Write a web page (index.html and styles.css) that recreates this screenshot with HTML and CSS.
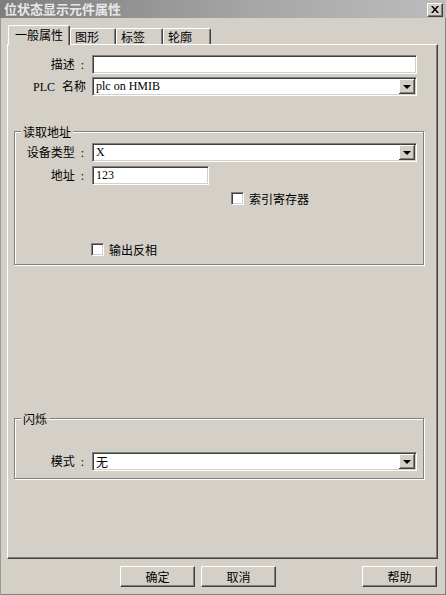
FILE: index.html
```html
<!DOCTYPE html>
<html>
<head>
<meta charset="utf-8">
<link rel="stylesheet" href="styles.css">
</head>
<body>
<div class="window">
  <div class="titlebar">
    <span class="title">位状态显示元件属性</span>
    <span class="close"><svg width="8" height="7" viewBox="0 0 8 7"><path d="M0 0h2l2 2.5 2-2.5h2l-3 3.5 3 3.5h-2l-2-2.5-2 2.5h-2l3-3.5z" fill="#000"/></svg></span>
  </div>
  <div class="tabs">
    <div class="tab active">一般属性</div>
    <div class="tab w46">图形</div>
    <div class="tab w47">标签</div>
    <div class="tab w48">轮廓</div>
  </div>
  <div class="panel">
    <div class="row">
      <span class="lbl">描述 :</span>
      <div class="field wide"></div>
    </div>
    <div class="row r2">
      <span class="lbl plc">PLC 名称</span>
      <div class="field wide select"><span class="val">plc on HMIB</span><span class="drop"><i class="tri"></i></span></div>
    </div>

    <div class="group g1">
      <div class="legend">读取地址</div>
      <div class="row">
        <span class="lbl glbl">设备类型 :</span>
        <div class="field wide select"><span class="val">X</span><span class="drop"><i class="tri"></i></span></div>
      </div>
      <div class="row r-addr">
        <span class="lbl glbl">地址 :</span>
        <div class="field short"><span class="val">123</span></div>
      </div>
      <div class="check c-index"><span class="box"></span><span class="ctext">索引寄存器</span></div>
      <div class="check c-inv"><span class="box"></span><span class="ctext">输出反相</span></div>
    </div>

    <div class="group g2">
      <div class="legend">闪烁</div>
      <div class="row">
        <span class="lbl glbl">模式 :</span>
        <div class="field wide select"><span class="val cjk">无</span><span class="drop"><i class="tri"></i></span></div>
      </div>
    </div>
  </div>
  <div class="buttons">
    <div class="btn">确定</div>
    <div class="btn b2">取消</div>
    <div class="btn b3">帮助</div>
  </div>
</div>
</body>
</html>
```

FILE: styles.css
```css
html, body {
  margin: 0;
  padding: 0;
  background: #d4d0c8;
}

.window {
  width: 446px;
  height: 595px;
  box-sizing: border-box;
  background: #d4d0c8;
  display: flex;
  flex-direction: column;
  font-family: "Liberation Serif", "Noto Sans CJK SC", serif;
  font-size: 12px;
  color: #000;
  box-shadow: inset 1px 0 0 #9a9a9a, inset -1px 0 0 #808080, inset 0 -1px 0 #808080;
}

.titlebar {
  height: 18px;
  background: linear-gradient(to right, #7e7e7e, #a8a8a8 60%, #bcbcbc);
  display: flex;
  align-items: center;
  justify-content: space-between;
  padding: 0 3px 0 4px;
}

.title {
  font-family: "Noto Sans CJK SC", sans-serif;
  font-weight: bold;
  font-size: 13px;
  line-height: 16px;
  color: #e8e8e8;
}

.close {
  width: 16px;
  height: 14px;
  box-sizing: border-box;
  background: #d4d0c8;
  border-top: 1px solid #fff;
  border-left: 1px solid #fff;
  border-right: 1px solid #404040;
  border-bottom: 1px solid #404040;
  box-shadow: inset -1px -1px 0 #808080;
  display: flex;
  align-items: center;
  justify-content: center;
  margin-top: 1px;
}

.tabs {
  margin-top: 7px;
  height: 20px;
  margin-bottom: -1px;
  padding-left: 8px;
  display: flex;
  align-items: flex-end;
  position: relative;
  z-index: 1;
}

.tab {
  height: 16px;
  margin-bottom: 1px;
  box-sizing: border-box;
  border-top: 1px solid #fff;
  border-left: 1px solid #fff;
  border-right: 1px solid #404040;
  box-shadow: inset -1px 0 0 #808080;
  border-radius: 2px 2px 0 0;
  padding-left: 4px;
  font-family: "Noto Sans CJK SC", sans-serif;
  font-size: 12px;
  line-height: 15px;
  background: #d4d0c8;
}

.tab.active {
  width: 62px;
  height: 20px;
  margin-bottom: 0;
  padding-left: 6px;
  line-height: 18px;
}

.w46 { width: 46px; }
.w47 { width: 47px; }
.w48 { width: 48px; }

.panel {
  margin-left: 7px;
  width: 431px;
  height: 515px;
  box-sizing: border-box;
  border-top: 1px solid #fff;
  border-left: 1px solid #fff;
  border-right: 1px solid #404040;
  border-bottom: 1px solid #404040;
  box-shadow: inset -1px -1px 0 #808080;
  padding-top: 10px;
}

.row {
  display: flex;
  align-items: center;
  height: 19px;
}

.r2 { margin-top: 3px; }
.r-addr { margin-top: 4px; }

.lbl {
  width: 84px;
  box-sizing: border-box;
  padding-right: 8px;
  text-align: right;
  white-space: pre;
  word-spacing: 3px;
  font-family: "Liberation Serif", "Noto Sans CJK SC", serif;
  line-height: 16px;
}

.lbl.plc {
  padding-right: 6px;
  word-spacing: 4px;
}

.glbl { width: 77px; }

.field {
  height: 19px;
  box-sizing: border-box;
  background: #fff;
  border-top: 1px solid #808080;
  border-left: 1px solid #808080;
  border-right: 1px solid #fff;
  border-bottom: 1px solid #fff;
  box-shadow: inset 1px 1px 0 #404040, inset -1px -1px 0 #d4d0c8;
  display: flex;
  align-items: center;
}

.wide { width: 325px; }
.short { width: 117px; }

.val {
  flex: 1;
  padding-left: 3px;
  line-height: 15px;
  white-space: nowrap;
}

.val.cjk { font-family: "Noto Sans CJK SC", sans-serif; }

.drop {
  width: 16px;
  height: 15px;
  margin-right: 1px;
  box-sizing: border-box;
  background: #d4d0c8;
  border-right: 1px solid #404040;
  border-bottom: 1px solid #404040;
  box-shadow: inset 1px 1px 0 #fff, inset -1px -1px 0 #808080;
  display: flex;
  align-items: center;
  justify-content: center;
}

.tri {
  width: 0;
  height: 0;
  border-left: 4px solid transparent;
  border-right: 4px solid transparent;
  border-top: 4px solid #000;
  margin-top: 1px;
}

.group {
  position: relative;
  margin-left: 6px;
  width: 410px;
  box-sizing: border-box;
  border: 1px solid #808080;
  box-shadow: 1px 1px 0 #fff, inset 1px 1px 0 #fff;
}

.g1 {
  margin-top: 35px;
  height: 134px;
  padding-top: 11px;
}

.g2 {
  margin-top: 153px;
  height: 61px;
  padding-top: 33px;
}

.legend {
  position: absolute;
  top: -8px;
  left: 6px;
  padding: 0 2px;
  background: #d4d0c8;
  font-family: "Noto Sans CJK SC", sans-serif;
  line-height: 15px;
}

.check {
  display: flex;
  align-items: center;
  height: 13px;
}

.c-index {
  margin-top: 7px;
  padding-left: 216px;
}

.c-inv {
  margin-top: 38px;
  padding-left: 76px;
}

.box {
  width: 13px;
  height: 13px;
  box-sizing: border-box;
  background: #fff;
  border-top: 1px solid #808080;
  border-left: 1px solid #808080;
  border-right: 1px solid #fff;
  border-bottom: 1px solid #fff;
  box-shadow: inset 1px 1px 0 #404040, inset -1px -1px 0 #d4d0c8;
}

.ctext {
  margin-left: 5px;
  font-family: "Noto Sans CJK SC", sans-serif;
  line-height: 15px;
}

.buttons {
  margin-top: 7px;
  display: flex;
  padding-left: 120px;
  padding-right: 9px;
}

.btn {
  width: 75px;
  height: 21px;
  box-sizing: border-box;
  background: #d4d0c8;
  border-top: 1px solid #fff;
  border-left: 1px solid #fff;
  border-right: 1px solid #404040;
  border-bottom: 1px solid #404040;
  box-shadow: inset -1px -1px 0 #808080;
  display: flex;
  align-items: center;
  justify-content: center;
  font-family: "Noto Sans CJK SC", sans-serif;
  line-height: 15px;
}

.b2 { margin-left: 6px; }
.b3 { margin-left: auto; }
```
